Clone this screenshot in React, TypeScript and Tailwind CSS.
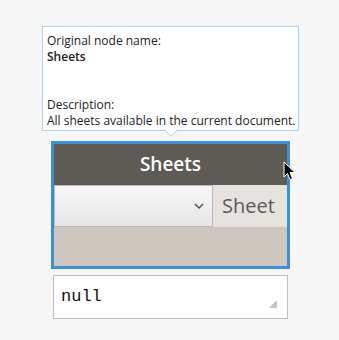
import React from "react";

export default function App() {
  return (
    <div className="relative w-[339px] h-[340px] bg-[#f6f6f6] pt-[26px] overflow-hidden" style={{ fontFamily: '"Open Sans", sans-serif' }}>
      {/* Tooltip */}
      <div className="relative ml-[42px] w-[257px] h-[105px] border border-[#a9d4ea] bg-white px-[4px] pt-[6px] text-[12px] leading-[16px] text-[#222]">
        <div>Original node name:</div>
        <div className="font-semibold">Sheets</div>
        <div className="h-[32px]" />
        <div>Description:</div>
        <div className="whitespace-nowrap">All sheets available in the current document.</div>
        <svg className="absolute left-[121px] bottom-[-7px]" width="14" height="8" viewBox="0 0 14 8">
          <polygon points="0,0 7,7 14,0" fill="white" />
          <polyline points="0,0.5 7,7 14,0.5" fill="none" stroke="#a9d4ea" strokeWidth="1" />
        </svg>
      </div>

      {/* Node */}
      <div className="mt-[10px] ml-[51px] w-[239px] h-[128px] border-[3px] border-[#3f8ed8] flex flex-col">
        <div className="h-[41px] bg-[#5e5a56] flex items-center justify-center text-white text-[19px] font-semibold">
          Sheets
        </div>
        <div className="h-[42px] flex bg-[#e6e2dd]">
          <div className="w-[159px] h-full border border-[#b9b9b9] bg-gradient-to-b from-[#f8f8f8] to-[#e6e6e6] flex items-center justify-end pr-[8px]">
            <svg width="10" height="6" viewBox="0 0 10 6">
              <polyline points="1,1 5,5 9,1" fill="none" stroke="#555" strokeWidth="1.5" />
            </svg>
          </div>
          <div className="flex-1 flex items-center pl-[9px] text-[20px] text-[#5a5a5a] overflow-hidden whitespace-nowrap">Sheet</div>
        </div>
        <div className="flex-1 bg-[#cdc7c0]" />
      </div>

      {/* null output */}
      <div className="relative mt-[6px] ml-[53px] w-[235px] h-[44px] border border-[#bdbdbd] bg-white flex items-center pl-[7px] text-[17px] text-[#111]" style={{ fontFamily: '"Liberation Mono", "DejaVu Sans Mono", monospace' }}>
        null
        <svg className="absolute right-[10px] bottom-[10px]" width="8" height="8" viewBox="0 0 8 8">
          <polygon points="8,0 8,8 0,8" fill="#c4c4c4" />
        </svg>
      </div>

      {/* Cursor */}
      <svg className="absolute left-[283px] top-[161px]" width="14" height="22" viewBox="0 0 14 22">
        <path d="M1 1 L1 16 L4.5 12.5 L7 18.5 L9.5 17.5 L7 11.5 L12 11.5 Z" fill="black" stroke="white" strokeWidth="1" />
      </svg>
    </div>
  );
}
